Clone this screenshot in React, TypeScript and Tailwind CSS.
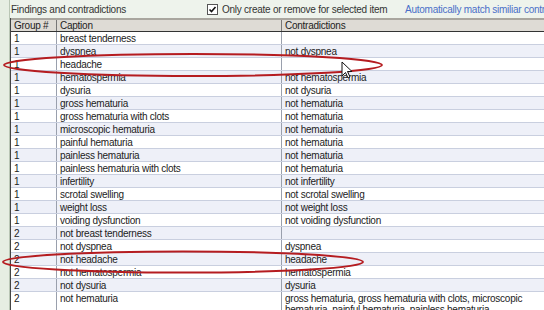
import React from "react";

const rows: [string, string, string][] = [
  ["1", "breast tenderness", ""],
  ["1", "dyspnea", "not dyspnea"],
  ["1", "headache", ""],
  ["1", "hematospermia", "not hematospermia"],
  ["1", "dysuria", "not dysuria"],
  ["1", "gross hematuria", "not hematuria"],
  ["1", "gross hematuria with clots", "not hematuria"],
  ["1", "microscopic hematuria", "not hematuria"],
  ["1", "painful hematuria", "not hematuria"],
  ["1", "painless hematuria", "not hematuria"],
  ["1", "painless hematuria with clots", "not hematuria"],
  ["1", "infertility", "not infertility"],
  ["1", "scrotal swelling", "not scrotal swelling"],
  ["1", "weight loss", "not weight loss"],
  ["1", "voiding dysfunction", "not voiding dysfunction"],
  ["2", "not breast tenderness", ""],
  ["2", "not dyspnea", "dyspnea"],
  ["2", "not headache", "headache"],
  ["2", "not hematospermia", "hematospermia"],
  ["2", "not dysuria", "dysuria"],
  ["2", "not hematuria", "gross hematuria, gross hematuria with clots, microscopic hematuria, painful hematuria, painless hematuria"],
];

export default function App() {
  return (
    <div
      className="relative w-[544px] h-[310px] overflow-hidden bg-[#eef3ec] text-[10px] tracking-[-0.25px] text-[#222]"
      style={{ fontFamily: '"Liberation Sans", Arial, sans-serif' }}
    >
      <div className="flex min-h-full">
        <div className="w-[10px] shrink-0 border-r border-[#b9c6b4] bg-[#e6eee2]" />
        <div className="flex flex-col flex-1 min-w-0">
          <div className="h-[18px] shrink-0 flex items-center pl-[1px] whitespace-nowrap">
            <span className="w-[196px] shrink-0 text-[#333]">Findings and contradictions</span>
            <span className="w-[11px] h-[11px] border border-[#555] bg-white flex items-center justify-center leading-none shrink-0">
              <svg width="9" height="9" viewBox="0 0 9 9"><path d="M1.5 4.5 L3.5 6.5 L7.5 2" stroke="#111" strokeWidth="1.6" fill="none" /></svg>
            </span>
            <span className="ml-[4px] w-[183px] shrink-0 text-[#333]">Only create or remove for selected item</span>
            <span className="text-[#4a6fc8]">Automatically match similiar contradictions</span>
          </div>
          <div className="shrink-0 border-l border-[#444] bg-white">
            <div className="grid grid-cols-[46px_225px_1fr] h-[14px] bg-[#dedbd5] border-t-2 border-[#a9a69f] border-b border-b-[#333] text-[#222]">
              <div className="pl-[3px] leading-[11px] border-r border-[#777]">Group #</div>
              <div className="pl-[3px] leading-[11px] border-r border-[#777]">Caption</div>
              <div className="pl-[3px] leading-[11px]">Contradictions</div>
            </div>
            {rows.map((r, i) => (
              <div
                key={i}
                className={`grid grid-cols-[46px_225px_1fr] min-h-[13px] border-b border-[#c9cfdf] ${i % 2 === 0 ? "bg-white" : "bg-[#eef0f8]"}`}
              >
                <div className="pl-[3px] pt-[1px] leading-[11px] border-r border-[#9aa0ad]">{r[0]}</div>
                <div className="pl-[3px] pt-[1px] leading-[11px] border-r border-[#9aa0ad]">{r[1]}</div>
                <div className="pl-[3px] pt-[1px] leading-[11px] whitespace-normal pr-[4px]">{r[2]}</div>
              </div>
            ))}
          </div>
        </div>
      </div>
      <svg className="absolute left-0 top-0 pointer-events-none" width="544" height="310">
        <ellipse cx="193" cy="65" rx="189" ry="11" fill="none" stroke="#b51c20" strokeWidth="2" />
        <ellipse cx="183" cy="262" rx="180" ry="10.5" fill="none" stroke="#b51c20" strokeWidth="2" />
        <path d="M342 62 L342 76 L345.5 72.5 L348 78 L350 77 L347.5 71.5 L352 71.5 Z" fill="white" stroke="#111" strokeWidth="1" />
      </svg>
    </div>
  );
}
